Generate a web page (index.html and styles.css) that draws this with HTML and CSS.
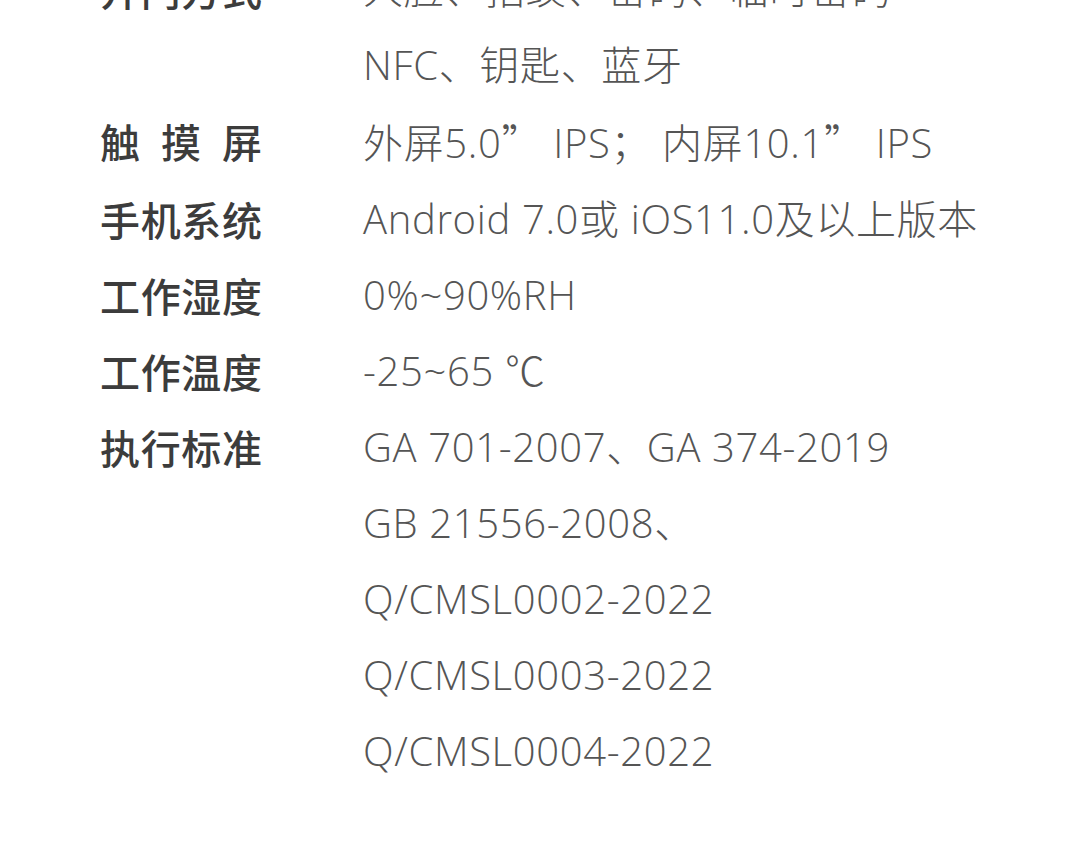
FILE: index.html
```html
<!DOCTYPE html>
<html lang="zh-CN">
<head>
    <meta charset="UTF-8">
    <meta name="viewport" content="width=device-width, initial-scale=1.0">
    <title>产品参数</title>
    <link rel="stylesheet" href="styles.css">
</head>
<body>
    <div class="spec-table">
        <div class="spec-row">
            <div class="spec-label">开门方式</div>
            <div class="spec-value">
                <div>人脸、指纹、密码、临时密码</div>
                <div>NFC、钥匙、蓝牙</div>
            </div>
        </div>
        <div class="spec-row">
            <div class="spec-label">触摸屏</div>
            <div class="spec-value">外屏5.0<span class="cjk">”</span> IPS；&nbsp;内屏10.1<span class="cjk">”</span> IPS</div>
        </div>
        <div class="spec-row">
            <div class="spec-label">手机系统</div>
            <div class="spec-value">Android 7.0或 iOS11.0及以上版本</div>
        </div>
        <div class="spec-row">
            <div class="spec-label">工作湿度</div>
            <div class="spec-value">0%~90%RH</div>
        </div>
        <div class="spec-row">
            <div class="spec-label">工作温度</div>
            <div class="spec-value">-25~65 ℃</div>
        </div>
        <div class="spec-row">
            <div class="spec-label">执行标准</div>
            <div class="spec-value">
                <div>GA 701-2007、GA 374-2019</div>
                <div>GB 21556-2008、</div>
                <div>Q/CMSL0002-2022</div>
                <div>Q/CMSL0003-2022</div>
                <div>Q/CMSL0004-2022</div>
            </div>
        </div>
    </div>
</body>
</html>
```

FILE: styles.css
```css
body {
    margin: 0;
    padding: 0;
    background-color: #fff;
    font-family: "Noto Sans CJK SC", "Noto Sans", sans-serif;
}
.spec-table {
    margin-top: -49px;
    padding-left: 100px;
    display: flex;
    flex-direction: column;
}
.spec-row {
    display: flex;
    font-size: 40px;
    line-height: 76px;
}
.spec-label {
    width: 162px;
    margin-right: 101px;
    flex-shrink: 0;
    color: #3c3c3c;
    font-weight: 500;
    text-align: justify;
    text-align-last: justify;
}
.spec-value {
    color: #555;
    font-family: "Open Sans", "Noto Sans CJK SC", sans-serif;
    font-weight: 300;
    letter-spacing: 0.65px;
}
.cjk {
    font-family: "Noto Sans CJK SC", sans-serif;
}
```
